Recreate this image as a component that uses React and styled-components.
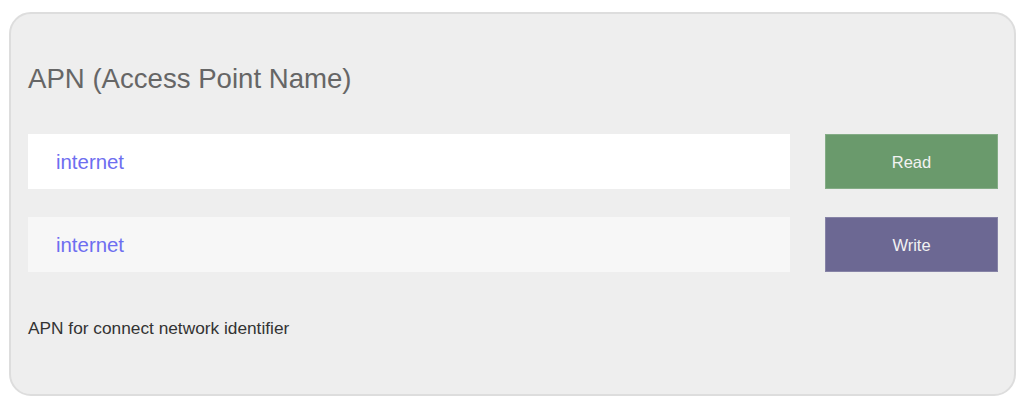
import React from "react";
import styled, { createGlobalStyle } from "styled-components";

const GlobalStyle = createGlobalStyle`
  * {
    box-sizing: border-box;
  }

  body {
    margin: 0;
    background: #ffffff;
    font-family: "Liberation Sans", Arial, sans-serif;
  }
`;

const Page = styled.div`
  padding: 12px 8px 12px 9px;
`;

const Card = styled.section`
  background: #eeeeee;
  border: 2px solid #dddddd;
  border-radius: 22px;
  padding: 49px 16px 56px 17px;
`;

const Title = styled.h2`
  margin: 0 0 39px;
  font-size: 27.6px;
  line-height: 32px;
  font-weight: 400;
  color: #666666;
`;

const Fields = styled.div`
  display: grid;
  grid-template-columns: 1fr 173px;
  column-gap: 35px;
  row-gap: 28px;
`;

const Field = styled.input`
  height: 55px;
  border: none;
  outline: none;
  padding: 2px 0 0 28px;
  background: ${(p) => (p.$muted ? "#f7f7f7" : "#ffffff")};
  color: #6e6ef0;
  font-family: "Liberation Sans", Arial, sans-serif;
  font-size: 20.4px;
`;

const Button = styled.button`
  height: 55px;
  padding-top: 2px;
  border: 1px solid rgba(255, 255, 255, 0.18);
  background: ${(p) => p.$color};
  color: #f2f2f2;
  font-family: "Liberation Sans", Arial, sans-serif;
  font-size: 16.5px;
  cursor: pointer;
`;

const Note = styled.p`
  margin: 46px 0 0;
  font-size: 17.3px;
  line-height: 20px;
  color: #333333;
`;

export default function App() {
  return (
    <>
      <GlobalStyle />
      <Page>
        <Card>
          <Title>APN (Access Point Name)</Title>
          <Fields>
            <Field defaultValue="internet" readOnly />
            <Button $color="#6a9a6c">Read</Button>
            <Field $muted defaultValue="internet" />
            <Button $color="#6c6893">Write</Button>
          </Fields>
          <Note>APN for connect network identifier</Note>
        </Card>
      </Page>
    </>
  );
}
